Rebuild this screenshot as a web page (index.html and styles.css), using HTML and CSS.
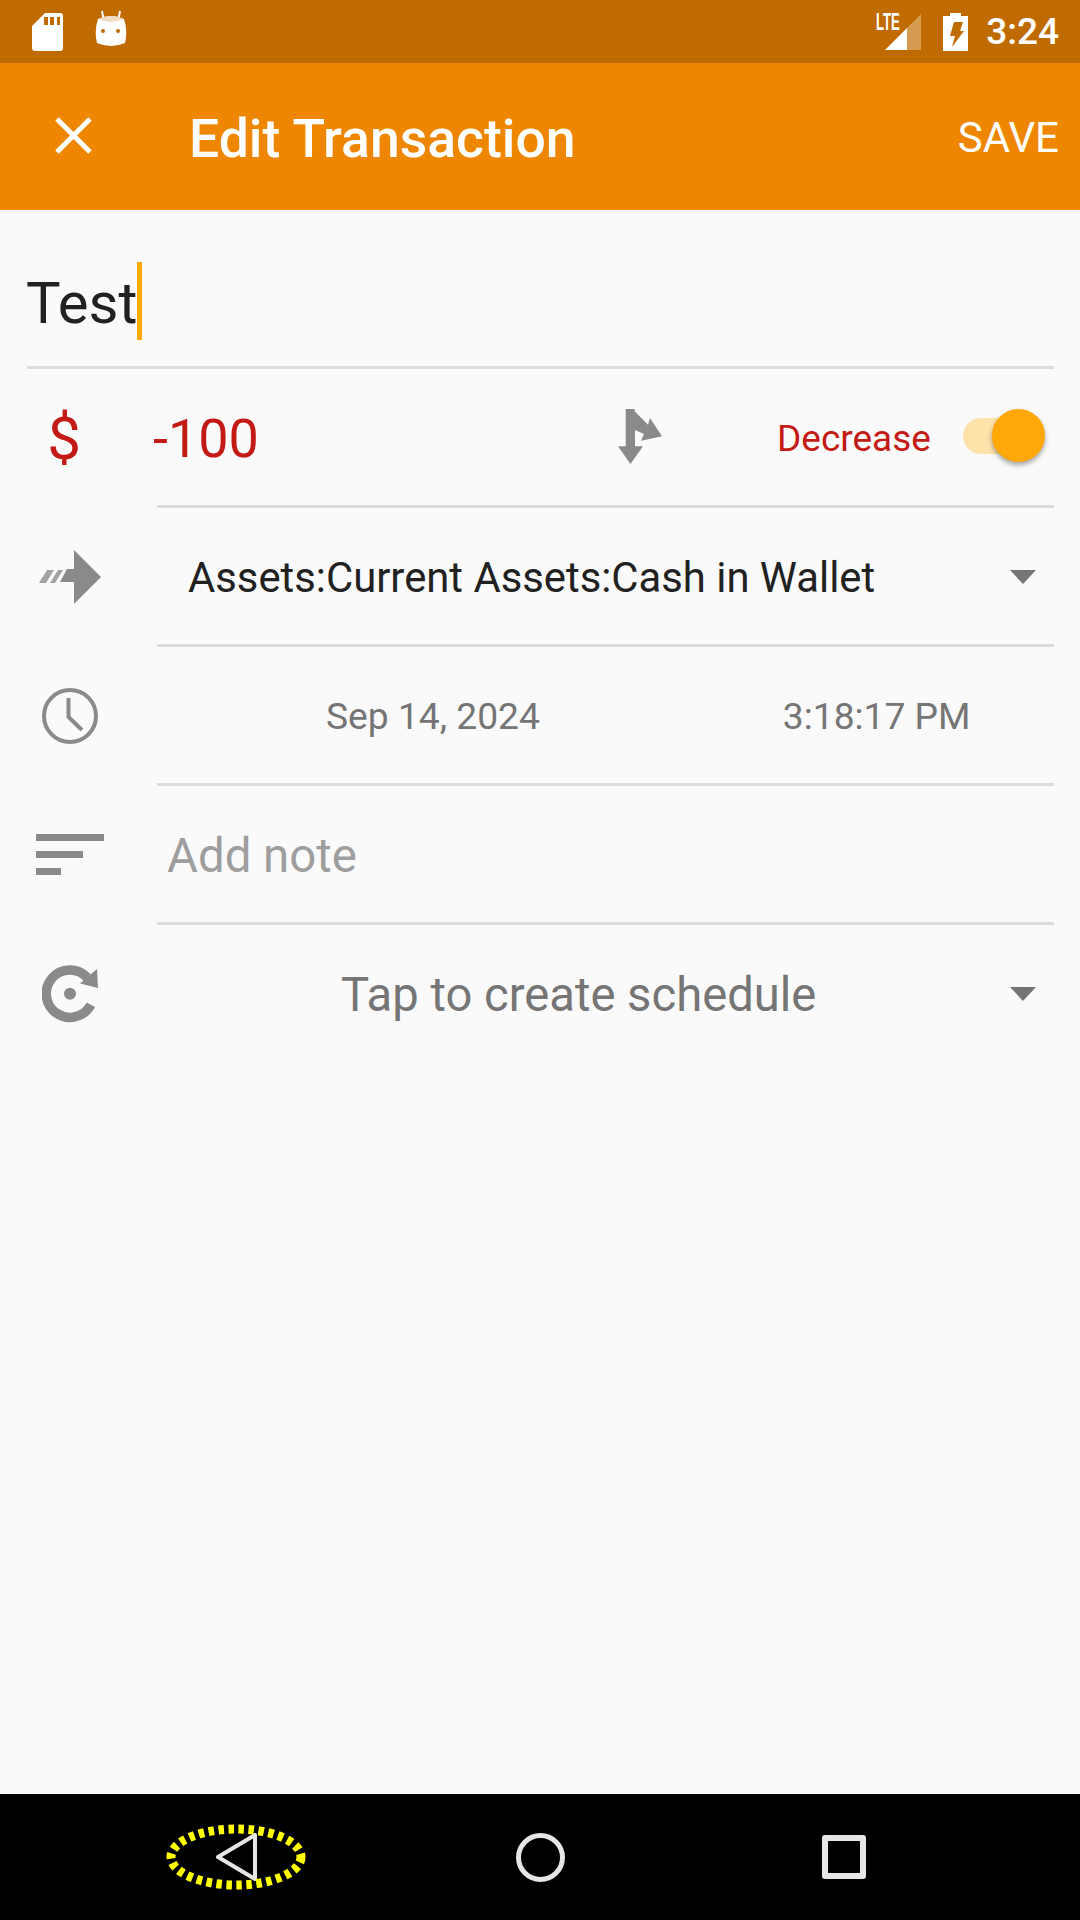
FILE: index.html
```html
<!DOCTYPE html>
<html lang="en">
<head>
    <meta charset="UTF-8">
    <meta name="viewport" content="width=device-width, initial-scale=1.0">
    <title>Edit Transaction</title>
    <link rel="stylesheet" href="styles.css">
</head>
<body>
    <div class="status-bar">
        <div class="status-left">
            <svg class="icon-sd" width="31" height="38" viewBox="0 0 31 38">
                <path fill="#fff" fill-rule="evenodd" d="M13 0H28Q31 0 31 3V35Q31 38 28 38H3Q0 38 0 35V13ZM12 4V12H16V4ZM18 4V12H22V4ZM25 4V12H28V4Z"/>
            </svg>
            <svg class="icon-android" width="32" height="38" viewBox="0 0 32 38">
                <path stroke="#fff" stroke-width="2" d="M7 1L8.500 9M25 1L23.500 9"/>
                <path fill="#fff" d="M3 9Q16 3 29 9Q33 20 30 33Q16 39 2 33Q-1 20 3 9Z"/>
                <path fill="#f0dcc4" d="M3 9Q16 3 29 9Q16 15 3 9Z"/>
                <circle cx="8" cy="21" r="2" fill="#bf6b00"/>
                <circle cx="23" cy="21" r="2" fill="#bf6b00"/>
            </svg>
        </div>
        <div class="status-right">
            <span class="lte-wrap">
                <span class="lte">LTE</span>
                <svg width="36" height="36" viewBox="0 0 36 36">
                    <path fill="#fff" d="M0 36L22 14V36Z"/>
                    <path fill="#d59c50" d="M22 14L36 0V36H22Z"/>
                </svg>
            </span>
            <svg width="25" height="38" viewBox="0 0 25 38">
                <path fill="#fff" fill-rule="evenodd" d="M7 0H18V3H25V38H0V3H7ZM11 9H20L17 18H21L9 34L12 23H7Z"/>
            </svg>
            <span class="clock">3:24</span>
        </div>
    </div>

    <header class="toolbar">
        <svg class="close" width="37" height="37" viewBox="0 0 37 37">
            <path stroke="#fff" stroke-width="5" d="M2 2L35 35M35 2L2 35"/>
        </svg>
        <h1 class="toolbar-title">Edit Transaction</h1>
        <span class="toolbar-action">SAVE</span>
    </header>

    <main class="form">
        <div class="name-field">
            <span class="name-text">Test</span><span class="caret"></span>
        </div>

        <div class="row">
            <div class="row-icon"><span class="currency">$</span></div>
            <div class="row-body amount-body">
                <span class="amount">-100</span>
                <svg class="split" width="46" height="56" viewBox="0 0 46 56">
                    <path fill="#8a8a8a" d="M7.700 0H16.700V2.300L30 15.700L32 9L44 27.300L23 31.700L26 25L17 21V37.300H25L12.500 55L0 37.300H7.700Z"/>
                </svg>
                <span class="type-label">Decrease</span>
                <span class="switch"><span class="switch-thumb"></span></span>
            </div>
        </div>

        <div class="row">
            <div class="row-icon">
                <svg width="62" height="54" viewBox="0 0 62 54">
                    <path fill="#8a8a8a" d="M35 0L62 27L35 54V32H21L28 19H35Z"/>
                    <path fill="#a3a3a3" d="M0 33L8 20H15L7 33ZM11 33L19 20H24L16 33Z"/>
                </svg>
            </div>
            <div class="row-body account-body">
                <span class="account">Assets:Current Assets:Cash in Wallet</span>
                <span class="dropdown"></span>
            </div>
        </div>

        <div class="row">
            <div class="row-icon">
                <svg width="56" height="56" viewBox="0 0 56 56">
                    <circle cx="28" cy="28" r="26" fill="none" stroke="#8a8a8a" stroke-width="4"/>
                    <path fill="none" stroke="#8a8a8a" stroke-width="4" d="M26.500 10V29L40 42"/>
                </svg>
            </div>
            <div class="row-body date-body">
                <span class="date">Sep 14, 2024</span>
                <span class="time">3:18:17 PM</span>
            </div>
        </div>

        <div class="row">
            <div class="row-icon">
                <div class="sort-icon">
                    <span class="sort-line sort-long"></span>
                    <span class="sort-line sort-mid"></span>
                    <span class="sort-line sort-short"></span>
                </div>
            </div>
            <div class="row-body note-body">
                <span class="note">Add note</span>
            </div>
        </div>

        <div class="row row-last">
            <div class="row-icon">
                <svg width="56" height="58" viewBox="0 0 56 58">
                    <path fill="none" stroke="#8a8a8a" stroke-width="9.500" d="M45.300 12.500A23.700 23.700 0 1 0 48.900 39.800"/>
                    <path fill="#8a8a8a" d="M56 23L38 18.500L55 4Z"/>
                    <circle cx="28" cy="28.700" r="6" fill="#8a8a8a"/>
                </svg>
            </div>
            <div class="row-body schedule-body">
                <span class="schedule">Tap to create schedule</span>
                <span class="dropdown"></span>
            </div>
        </div>
    </main>

    <nav class="nav-bar">
        <span class="nav-item">
            <svg width="41" height="48" viewBox="0 0 41 48">
                <path fill="none" stroke="#e6e6e6" stroke-width="4" stroke-linejoin="round" d="M39 2V46L2 24Z"/>
            </svg>
            <svg class="highlight" width="142" height="68" viewBox="0 0 142 68">
                <ellipse cx="71" cy="34" rx="65" ry="28" fill="none" stroke="#ffff00" stroke-width="9" stroke-dasharray="5.500 4.500"/>
            </svg>
        </span>
        <span class="nav-item">
            <span class="nav-circle"></span>
        </span>
        <span class="nav-item">
            <span class="nav-square"></span>
        </span>
    </nav>
</body>
</html>
```

FILE: styles.css
```css
* {
    margin: 0;
    padding: 0;
    box-sizing: border-box;
}

body {
    width: 1080px;
    height: 1920px;
    display: flex;
    flex-direction: column;
    font-family: Roboto, sans-serif;
    background-color: #fafafa;
    overflow: hidden;
}

/* status bar */
.status-bar {
    height: 63px;
    display: flex;
    justify-content: space-between;
    align-items: center;
    padding: 0 21px 0 32px;
    background-color: #bf6b00;
    color: #fff;
}

.status-left {
    display: flex;
    align-items: center;
    gap: 32px;
}

.icon-android {
    margin-top: -5px;
}

.status-right {
    display: flex;
    align-items: center;
    gap: 19px;
}

.lte-wrap {
    position: relative;
    display: block;
    width: 45px;
    height: 36px;
    margin-right: 3px;
    padding-left: 9px;
}

.lte {
    position: absolute;
    left: 0;
    top: -3px;
    font-family: "Liberation Sans", sans-serif;
    font-size: 23px;
    font-weight: 700;
    line-height: 1;
    transform: scaleX(0.57);
    transform-origin: left top;
}

.clock {
    margin-left: -1px;
    font-size: 37px;
    font-weight: 500;
}

/* toolbar */
.toolbar {
    height: 147px;
    display: flex;
    align-items: center;
    padding: 0 21px 0 55px;
    background-color: #ef8600;
    color: #fff;
}

.close {
    margin-top: -3px;
}

.toolbar-title {
    flex: 1;
    margin-left: 97px;
    margin-top: 3px;
    font-size: 53.500px;
    font-weight: 500;
}

.toolbar-action {
    margin-top: 2px;
    font-size: 42px;
}

/* form */
.form {
    flex: 1;
    padding-right: 26px;
}

.name-field {
    height: 159px;
    margin-left: 27px;
    display: flex;
    align-items: center;
    padding-top: 30px;
    border-bottom: 3px solid #dcdcdc;
    font-size: 58px;
    color: #212121;
}

.name-text {
    margin-left: -1px;
}

.caret {
    width: 5px;
    height: 78px;
    margin-top: -4px;
    background-color: #ffab00;
}

.row {
    height: 139px;
    display: flex;
}

.row-icon {
    width: 157px;
    padding-right: 17px;
    padding-bottom: 2px;
    display: flex;
    align-items: center;
    justify-content: center;
}

.row-body {
    flex: 1;
    display: flex;
    align-items: center;
    padding-top: 3px;
    border-bottom: 3px solid #dcdcdc;
}

.row-last .row-body {
    border-bottom-color: transparent;
}

.currency {
    margin-left: -12px;
    margin-top: 2px;
    font-size: 60px;
    color: #c41a16;
}

.amount-body {
    color: #c41a16;
}

.amount {
    width: 465px;
    margin-left: -4px;
    font-size: 54px;
}

.split {
    margin-top: -4px;
}

.type-label {
    margin-left: 113px;
    font-size: 37px;
}

.switch {
    position: relative;
    width: 60px;
    height: 36px;
    margin-left: 32px;
    margin-top: -5px;
    border-radius: 18px;
    background-color: #fde2a9;
}

.switch-thumb {
    position: absolute;
    right: -22px;
    top: -9px;
    width: 53px;
    height: 53px;
    border-radius: 50%;
    background-color: #ffa807;
    box-shadow: 0 3px 5px rgba(0, 0, 0, 0.35);
}

.account-body,
.schedule-body {
    justify-content: space-between;
    padding-right: 18px;
}

.account {
    margin-left: 31px;
    font-size: 41.800px;
    color: #212121;
}

.dropdown {
    width: 0;
    height: 0;
    margin-top: -2px;
    border-left: 13.500px solid transparent;
    border-right: 13.500px solid transparent;
    border-top: 14px solid #757575;
}

.date-body {
    font-size: 37.200px;
    color: #757575;
    padding-top: 1px;
}

.date {
    margin-left: 169px;
}

.time {
    margin-left: 243px;
}

.sort-icon {
    width: 68px;
    display: flex;
    flex-direction: column;
    gap: 10px;
}

.sort-line {
    height: 7px;
    background-color: #8a8a8a;
}

.sort-long {
    width: 68px;
}

.sort-mid {
    width: 47px;
}

.sort-short {
    width: 25px;
}

.note {
    margin-left: 10px;
    font-size: 47.400px;
    color: #9e9e9e;
}

.schedule {
    margin-left: 184px;
    font-size: 47.200px;
    color: #757575;
}

/* navigation bar */
.nav-bar {
    height: 126px;
    display: flex;
    background-color: #000;
}

.nav-item {
    position: relative;
    width: 304px;
    display: flex;
    align-items: center;
    justify-content: center;
}

.nav-item:first-child {
    width: 304px;
    margin-left: 84px;
}

.highlight {
    position: absolute;
    left: 81px;
    top: 29px;
}

.nav-circle {
    width: 49px;
    height: 49px;
    border: 5px solid #e6e6e6;
    border-radius: 50%;
}

.nav-square {
    width: 44px;
    height: 44px;
    border: 6px solid #e6e6e6;
    border-radius: 3px;
}
```
